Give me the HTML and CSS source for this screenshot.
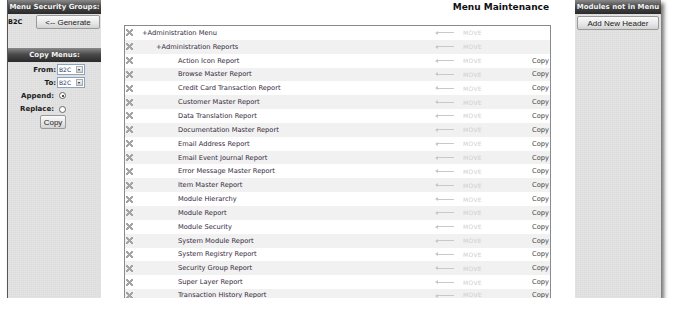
FILE: index.html
```html
<!DOCTYPE html>
<html lang="en">
<head>
    <meta charset="UTF-8">
    <title>Menu Maintenance</title>
    <link rel="stylesheet" href="styles.css">
</head>
<body>
    <div class="frame">
        <div class="side side-left">
            <div class="side-head">Menu Security Groups:</div>
            <div class="gen-row">
                <span class="grp">B2C</span>
                <button class="btn btn-gen">&lt;-- Generate</button>
            </div>

            <div class="side-head copy-head">Copy Menus:</div>
            <div class="frm-row frm-first">
                <label>From:</label>
                <span class="sel"><span class="sel-val">B2C</span><span class="sel-btn"></span></span>
            </div>
            <div class="frm-row">
                <label>To:</label>
                <span class="sel"><span class="sel-val">B2C</span><span class="sel-btn"></span></span>
            </div>
            <div class="frm-row frm-radio">
                <label>Append:</label>
                <span class="radio checked"></span>
            </div>
            <div class="frm-row frm-radio">
                <label>Replace:</label>
                <span class="radio"></span>
            </div>
            <div class="copy-wrap">
                <button class="btn btn-copy">Copy</button>
            </div>
        </div>

        <div class="main">
            <div class="title">Menu Maintenance</div>
            <div class="menu-box">
                <div class="row"><span class="del"></span><span class="name lv0">+Administration Menu</span><span class="arrow"></span><span class="move">MOVE</span><span class="copy"></span></div>
                <div class="row"><span class="del"></span><span class="name lv1">+Administration Reports</span><span class="arrow"></span><span class="move">MOVE</span><span class="copy"></span></div>
                <div class="row"><span class="del"></span><span class="name lv2">Action Icon Report</span><span class="arrow"></span><span class="move">MOVE</span><span class="copy">Copy</span></div>
                <div class="row"><span class="del"></span><span class="name lv2">Browse Master Report</span><span class="arrow"></span><span class="move">MOVE</span><span class="copy">Copy</span></div>
                <div class="row"><span class="del"></span><span class="name lv2">Credit Card Transaction Report</span><span class="arrow"></span><span class="move">MOVE</span><span class="copy">Copy</span></div>
                <div class="row"><span class="del"></span><span class="name lv2">Customer Master Report</span><span class="arrow"></span><span class="move">MOVE</span><span class="copy">Copy</span></div>
                <div class="row"><span class="del"></span><span class="name lv2">Data Translation Report</span><span class="arrow"></span><span class="move">MOVE</span><span class="copy">Copy</span></div>
                <div class="row"><span class="del"></span><span class="name lv2">Documentation Master Report</span><span class="arrow"></span><span class="move">MOVE</span><span class="copy">Copy</span></div>
                <div class="row"><span class="del"></span><span class="name lv2">Email Address Report</span><span class="arrow"></span><span class="move">MOVE</span><span class="copy">Copy</span></div>
                <div class="row"><span class="del"></span><span class="name lv2">Email Event Journal Report</span><span class="arrow"></span><span class="move">MOVE</span><span class="copy">Copy</span></div>
                <div class="row"><span class="del"></span><span class="name lv2">Error Message Master Report</span><span class="arrow"></span><span class="move">MOVE</span><span class="copy">Copy</span></div>
                <div class="row"><span class="del"></span><span class="name lv2">Item Master Report</span><span class="arrow"></span><span class="move">MOVE</span><span class="copy">Copy</span></div>
                <div class="row"><span class="del"></span><span class="name lv2">Module Hierarchy</span><span class="arrow"></span><span class="move">MOVE</span><span class="copy">Copy</span></div>
                <div class="row"><span class="del"></span><span class="name lv2">Module Report</span><span class="arrow"></span><span class="move">MOVE</span><span class="copy">Copy</span></div>
                <div class="row"><span class="del"></span><span class="name lv2">Module Security</span><span class="arrow"></span><span class="move">MOVE</span><span class="copy">Copy</span></div>
                <div class="row"><span class="del"></span><span class="name lv2">System Module Report</span><span class="arrow"></span><span class="move">MOVE</span><span class="copy">Copy</span></div>
                <div class="row"><span class="del"></span><span class="name lv2">System Registry Report</span><span class="arrow"></span><span class="move">MOVE</span><span class="copy">Copy</span></div>
                <div class="row"><span class="del"></span><span class="name lv2">Security Group Report</span><span class="arrow"></span><span class="move">MOVE</span><span class="copy">Copy</span></div>
                <div class="row"><span class="del"></span><span class="name lv2">Super Layer Report</span><span class="arrow"></span><span class="move">MOVE</span><span class="copy">Copy</span></div>
                <div class="row row-last"><span class="del"></span><span class="name lv2">Transaction History Report</span><span class="arrow"></span><span class="move">MOVE</span><span class="copy">Copy</span></div>
            </div>
        </div>

        <div class="side side-right">
            <div class="side-head">Modules not in Menu</div>
            <div class="add-wrap">
                <button class="btn btn-add">Add New Header</button>
            </div>
        </div>
    </div>
</body>
</html>
```

FILE: styles.css
```css
body {
    margin: 0;
    background: #fff;
    font-family: "DejaVu Sans", Verdana, sans-serif;
}
.frame {
    display: flex;
    margin-left: 7px;
    width: 653px;
    height: 298px;
    border-left: 1px solid #555;
    overflow: hidden;
    box-shadow: 3px 3px 4px rgba(0, 0, 0, 0.55);
}
.side {
    flex: none;
    background-color: #dcdcdc;
    background-image:
        repeating-linear-gradient(0deg, rgba(255, 255, 255, 0.12) 0 1px, transparent 1px 2px),
        repeating-linear-gradient(90deg, rgba(255, 255, 255, 0.12) 0 1px, transparent 1px 2px);
}
.side-left {
    width: 93px;
}
.side-right {
    width: 86px;
}
.side-head {
    height: 14px;
    line-height: 14px;
    text-align: center;
    color: #f2f2f2;
    font-size: 7px;
    font-weight: bold;
    background: linear-gradient(#8a8a8a, #4a4a4a 45%, #2a2a2a);
    white-space: nowrap;
}
.btn {
    display: block;
    font-family: "Liberation Sans", Arial, sans-serif;
    font-size: 8px;
    color: #222;
    padding: 0;
    border: 1px solid #9a9a9a;
    border-radius: 2px;
    background: linear-gradient(#fafafa, #e6e6e6 60%, #d2d2d2);
}
.gen-row {
    display: flex;
    align-items: center;
    height: 14px;
    margin-top: 1px;
}
.grp {
    font-size: 6.5px;
    font-weight: bold;
    color: #111;
}
.btn-gen {
    width: 64px;
    height: 14px;
    margin-left: auto;
    margin-right: 1px;
}
.copy-head {
    margin-top: 19px;
}
.frm-row {
    display: flex;
    align-items: center;
    height: 13px;
}
.frm-first {
    margin-top: 1px;
}
.frm-row label {
    width: 48px;
    text-align: right;
    font-size: 7px;
    font-weight: bold;
    color: #1a1a1a;
}
.frm-radio {
    height: 13.5px;
}
.frm-radio label {
    width: 46px;
}
.sel {
    display: flex;
    align-items: center;
    width: 26px;
    height: 9px;
    margin-left: 1px;
    border: 1px solid #8aa4c0;
    background: #fff;
}
.sel-val {
    flex: 1;
    font-size: 6px;
    color: #2a3a5a;
    padding-left: 1px;
}
.sel-btn {
    position: relative;
    width: 7px;
    height: 7px;
    margin-right: 1px;
    background: linear-gradient(#f4f4f4, #cfcfcf);
    border: 1px solid #aaa;
    box-sizing: border-box;
}
.sel-btn::after {
    content: "";
    position: absolute;
    left: 1px;
    top: 2px;
    border-left: 1.5px solid transparent;
    border-right: 1.5px solid transparent;
    border-top: 2px solid #222;
}
.radio {
    width: 5px;
    height: 5px;
    margin-left: 5px;
    border: 1px solid #666;
    border-radius: 50%;
    background: #fff;
    position: relative;
}
.radio.checked::after {
    content: "";
    position: absolute;
    left: 1.5px;
    top: 1.5px;
    width: 2px;
    height: 2px;
    border-radius: 50%;
    background: #111;
}
.copy-wrap {
    display: flex;
    margin-top: -1px;
    padding-left: 32px;
}
.btn-copy {
    width: 26px;
    height: 14px;
}
.main {
    flex: 1;
    background: #fff;
}
.title {
    height: 25px;
    line-height: 14px;
    text-align: right;
    padding-right: 26px;
    font-size: 9px;
    font-weight: bold;
    color: #111;
}
.menu-box {
    width: 425px;
    margin-left: 23px;
    border: 1px solid #8a8a8a;
}
.row {
    display: grid;
    grid-template-columns: 17px 1fr 27px 50px 37px;
    align-items: center;
    height: 13.85px;
    font-size: 6.7px;
}
.row:nth-child(even) {
    background: #f1f1f1;
}
.row-last {
    align-items: start;
    padding-top: 2px;
    box-sizing: border-box;
}
.row-last .del {
    margin-top: 1px;
}
.row-last .arrow {
    margin-top: 4px;
}
.del {
    width: 7px;
    height: 7px;
    margin-left: 1px;
    background:
        linear-gradient(45deg, transparent 38%, #a4a4a4 38% 62%, transparent 62%),
        linear-gradient(-45deg, transparent 38%, #a4a4a4 38% 62%, transparent 62%);
}
.name {
    color: #34293c;
    white-space: nowrap;
}
.lv1 {
    padding-left: 14px;
}
.lv2 {
    padding-left: 36px;
}
.arrow {
    position: relative;
    width: 18px;
    height: 1px;
    background: #c8c8c8;
}
.arrow::before {
    content: "";
    position: absolute;
    left: -1px;
    top: -1.5px;
    border-top: 2px solid transparent;
    border-bottom: 2px solid transparent;
    border-right: 3px solid #c8c8c8;
}
.move {
    color: #cfcfcf;
    font-size: 6px;
    letter-spacing: 0.3px;
}
.copy {
    text-align: right;
    padding-right: 1px;
    color: #444;
}
.add-wrap {
    padding: 2px 2px 0 2px;
}
.btn-add {
    width: 82px;
    height: 14px;
}
```
